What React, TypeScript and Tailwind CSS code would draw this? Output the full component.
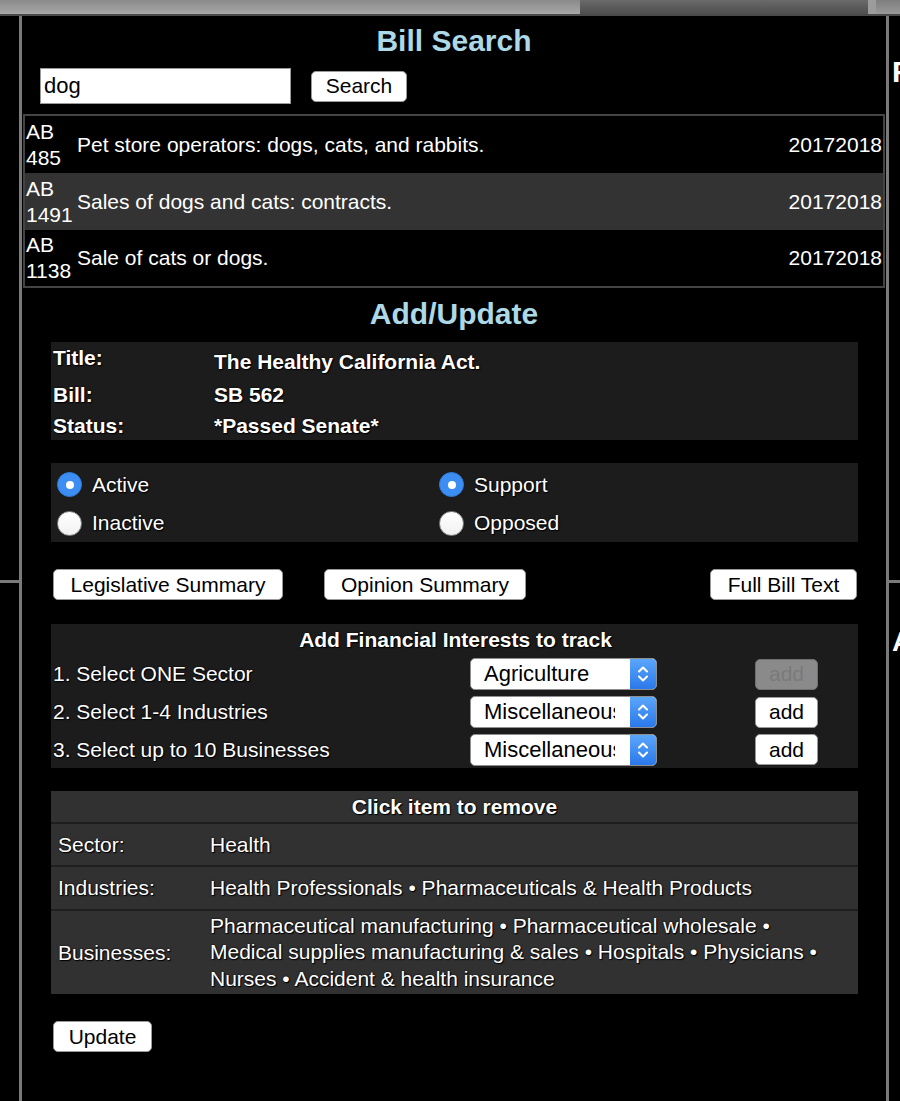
import React from 'react';

// Bill tracker – search + add/update panel
const FONT = "font-['Liberation_Sans',Arial,sans-serif]";
const SHADOW = '[text-shadow:0_0_2px_#000,1px_1px_1px_#000]';

type Bill = { house: string; num: string; title: string; session: string };

const bills: Bill[] = [
  { house: 'AB', num: '485', title: 'Pet store operators: dogs, cats, and rabbits.', session: '20172018' },
  { house: 'AB', num: '1491', title: 'Sales of dogs and cats: contracts.', session: '20172018' },
  { house: 'AB', num: '1138', title: 'Sale of cats or dogs.', session: '20172018' },
];

const Btn: React.FC<{ label: string; w: string; disabled?: boolean }> = ({ label, w, disabled }) => (
  <div
    className={`flex h-[31px] items-center justify-center rounded-[5px] border text-[21px] ${w} ${
      disabled ? 'border-[#6f6f6f] bg-[#8a8a8a] text-[#7a7a7a]' : 'border-[#9a9a9a] bg-white text-black'
    }`}
  >
    {label}
  </div>
);

const Radio: React.FC<{ checked?: boolean }> = ({ checked }) =>
  checked ? (
    <div className="flex h-[25px] w-[25px] items-center justify-center rounded-full border border-[#2f7ad8] bg-[#3d8ef2]">
      <div className="h-[8px] w-[8px] rounded-full bg-white" />
    </div>
  ) : (
    <div className="h-[25px] w-[25px] rounded-full border border-[#8a8a8a] bg-gradient-to-b from-white to-[#f1f1f1]" />
  );

const Select: React.FC<{ value: string }> = ({ value }) => (
  <div className="flex h-[32px] w-[187px] overflow-hidden rounded-[5px] border border-[#8f8f8f] bg-white">
    <div className="flex-1 overflow-hidden pl-[13px] pr-[15px]">
      <div className="overflow-hidden whitespace-nowrap text-[22px] leading-[30px] text-black">{value}</div>
    </div>
    <div className="flex w-[26px] items-center justify-center bg-gradient-to-b from-[#5aa6fa] to-[#2a78ea]">
      <svg width="12" height="20" viewBox="0 0 12 20" fill="none" stroke="white" strokeWidth="2" strokeLinecap="round" strokeLinejoin="round">
        <path d="M2 7.5 6 3.5 10 7.5" />
        <path d="M2 12.5 6 16.5 10 12.5" />
      </svg>
    </div>
  </div>
);

const Divider: React.FC = () => (
  <div className="flex flex-col">
    <div className="h-[564px]" />
    <div className="h-[3px] bg-[#7a7a7a]" />
  </div>
);

const App: React.FC = () => {
  return (
    <div className={`flex h-[1101px] flex-col overflow-hidden bg-black text-white ${FONT}`}>
      {/* barra superior */}
      <div className="flex h-[14px]">
        <div className="w-[580px] bg-gradient-to-b from-[#8a8a8a] to-[#a8a8a8]" />
        <div className="w-[288px] bg-gradient-to-b from-[#6a6a6a] to-[#4e4e4e]" />
        <div className="w-[8px] bg-[#9c9c9c]" />
        <div className="flex-1 bg-gradient-to-b from-[#7e7e7e] to-[#999]" />
      </div>
      <div className="h-[2px] bg-[#4a4a4a]" />

      <div className="flex flex-1">
        {/* columna izquierda */}
        <div className="w-[19px]">
          <Divider />
        </div>

        {/* panel principal */}
        <div className="w-[870px] border-x-[3px] border-[#7a7a7a] pt-[7px]">
          <h1 className={`text-center text-[30px] font-bold leading-[36px] text-[#add8e6] ${SHADOW}`}>Bill Search</h1>

          <div className="mt-[9px] flex items-center pl-[18px]">
            <div className="h-[36px] w-[251px] border border-[#9a9a9a] bg-white pl-[3px] text-[22px] leading-[34px] text-black">dog</div>
            <div className="ml-[20px]">
              <Btn label="Search" w="w-[96px]" />
            </div>
          </div>

          {/* resultados */}
          <div className="mx-[1px] mt-[10px] border-2 border-[#444]">
            {bills.map((b, i) => (
              <div
                key={b.num}
                className={`flex items-center text-[21px] ${i === 2 ? 'h-[56px]' : 'h-[57px]'} ${i % 2 === 1 ? 'bg-[#333]' : 'bg-black'}`}
              >
                <div className="w-[52px] pl-[1px] leading-[26px]">
                  <div>{b.house}</div>
                  <div>{b.num}</div>
                </div>
                <div className="flex-1">{b.title}</div>
                <div className="pr-[1px]">{b.session}</div>
              </div>
            ))}
          </div>

          <h2 className={`mt-[8px] text-center text-[30px] font-bold leading-[36px] text-[#add8e6] ${SHADOW}`}>Add/Update</h2>

          <div className="pl-[29px] pr-[28px]">
            {/* datos del proyecto */}
            <div className={`mt-[10px] bg-[#1c1c1c] pl-[2px] text-[21px] font-bold ${SHADOW}`}>
              <div className="flex h-[36px]">
                <div className="w-[161px] leading-[32px]">Title:</div>
                <div className="mt-[4px] leading-[32px]">The Healthy California Act.</div>
              </div>
              <div className="flex h-[33px] leading-[33px]">
                <div className="w-[161px]">Bill:</div>
                <div>SB 562</div>
              </div>
              <div className="flex h-[29px] leading-[29px]">
                <div className="w-[161px]">Status:</div>
                <div>*Passed Senate*</div>
              </div>
            </div>

            {/* estado / posición */}
            <div className={`mt-[23px] grid h-[79px] grid-cols-[382px_1fr] grid-rows-[39px_38px] bg-[#1c1c1c] pl-[6px] pt-[2px] text-[21px] ${SHADOW}`}>
              <label className="flex items-center gap-[10px]">
                <Radio checked />
                Active
              </label>
              <label className="flex items-center gap-[10px]">
                <Radio checked />
                Support
              </label>
              <label className="flex items-center gap-[10px]">
                <Radio />
                Inactive
              </label>
              <label className="flex items-center gap-[10px]">
                <Radio />
                Opposed
              </label>
            </div>

            {/* botones de resumen */}
            <div className="mt-[27px] flex pl-[2px]">
              <Btn label="Legislative Summary" w="w-[230px]" />
              <div className="ml-[41px]">
                <Btn label="Opinion Summary" w="w-[202px]" />
              </div>
              <div className="ml-auto mr-[1px]">
                <Btn label="Full Bill Text" w="w-[147px]" />
              </div>
            </div>

            {/* intereses financieros */}
            <div className={`mt-[24px] bg-[#1c1c1c] pl-[2px] text-[21px] ${SHADOW}`}>
              <div className="h-[31px] text-center font-bold leading-[31px]">Add Financial Interests to track</div>
              {[
                { label: '1. Select ONE Sector', value: 'Agriculture', disabled: true, h: 'h-[38px]' },
                { label: '2. Select 1-4 Industries', value: 'Miscellaneous', disabled: false, h: 'h-[38px]' },
                { label: '3. Select up to 10 Businesses', value: 'Miscellaneous', disabled: false, h: 'h-[37px]' },
              ].map((r) => (
                <div key={r.label} className={`flex items-center ${r.h}`}>
                  <div className="w-[417px]">{r.label}</div>
                  <div className="[text-shadow:none]">
                    <Select value={r.value} />
                  </div>
                  <div className="ml-[98px] [text-shadow:none]">
                    <Btn label="add" w="w-[63px]" disabled={r.disabled} />
                  </div>
                </div>
              ))}
            </div>

            {/* elementos seleccionados */}
            <div className={`mt-[23px] bg-[#313131] text-[21px] ${SHADOW}`}>
              <div className="h-[33px] border-b-2 border-[#1e1e1e] text-center font-bold leading-[31px]">Click item to remove</div>
              <div className="flex h-[43px] items-center border-b-2 border-[#1e1e1e]">
                <div className="w-[159px] pl-[7px]">Sector:</div>
                <div>Health</div>
              </div>
              <div className="flex h-[44px] items-center border-b-2 border-[#1e1e1e]">
                <div className="w-[159px] pl-[7px]">Industries:</div>
                <div>Health Professionals • Pharmaceuticals &amp; Health Products</div>
              </div>
              <div className="flex h-[83px] items-center">
                <div className="w-[159px] shrink-0 pl-[7px]">Businesses:</div>
                <div className="leading-[26.5px]">
                  Pharmaceutical manufacturing • Pharmaceutical wholesale •<br />
                  Medical supplies manufacturing &amp; sales • Hospitals • Physicians •<br />
                  Nurses • Accident &amp; health insurance
                </div>
              </div>
            </div>

            <div className="mt-[27px] pl-[2px]">
              <Btn label="Update" w="w-[99px]" />
            </div>
          </div>
        </div>

        {/* columna derecha (panel vecino cortado) */}
        <div className="w-[11px] overflow-hidden">
          <div className="flex flex-col">
            <div className="h-[38px]" />
            <div className="whitespace-nowrap pl-[3px] text-[30px] font-bold leading-[36px]">F</div>
            <div className="h-[490px]" />
            <div className="h-[3px] bg-[#7a7a7a]" />
            <div className="h-[42px]" />
            <div className="whitespace-nowrap pl-[3px] text-[28px] font-bold leading-[34px]">A</div>
          </div>
        </div>
      </div>
    </div>
  );
};

export default App;
